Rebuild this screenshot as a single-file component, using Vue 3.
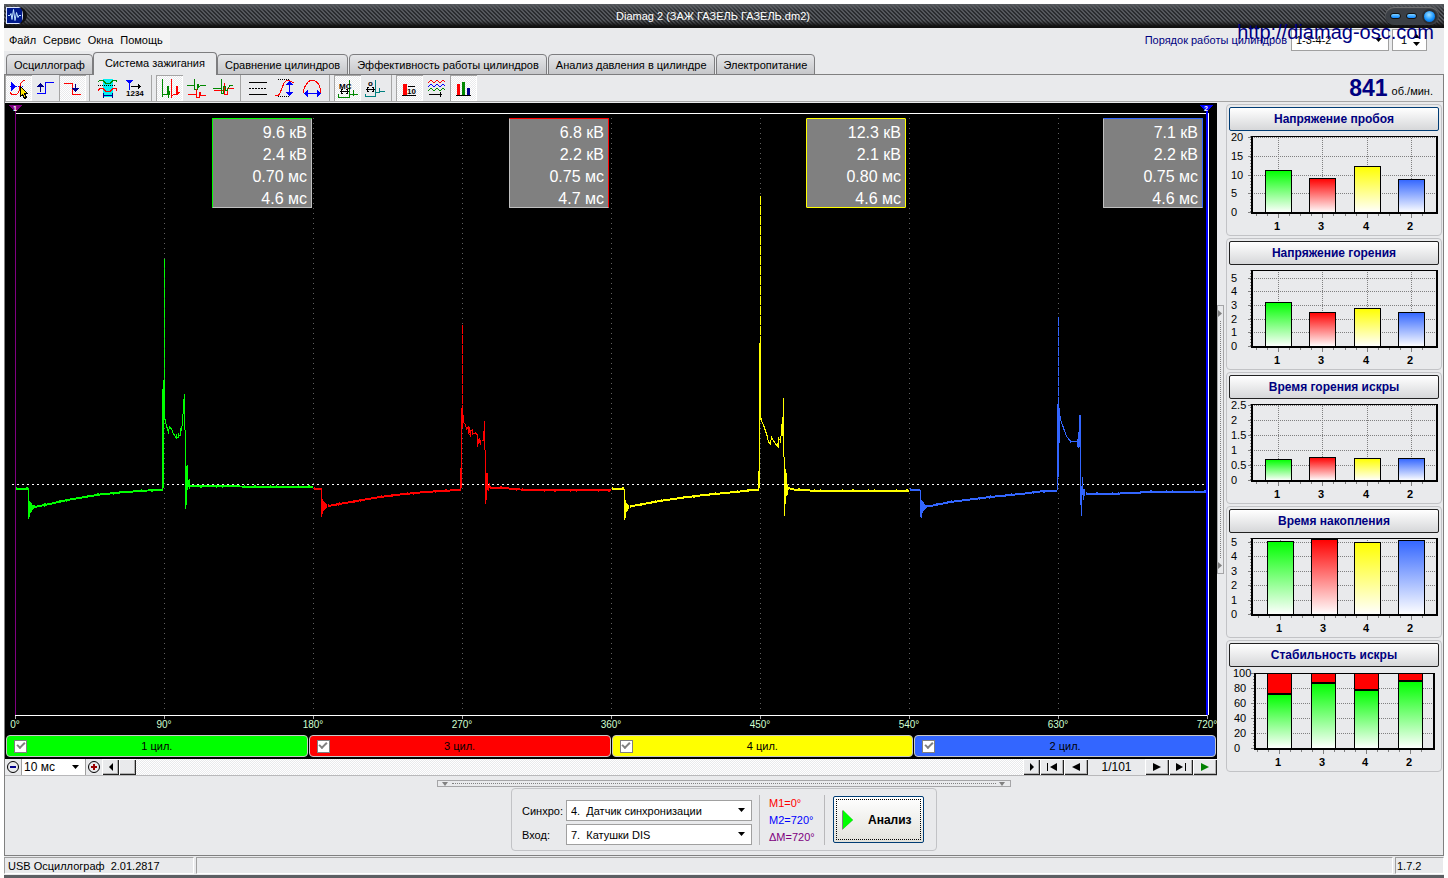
<script setup>
import { ref } from 'vue'

const menus = ['Файл', 'Сервис', 'Окна', 'Помощь']
const tabs = [
  'Осциллограф',
  'Система зажигания',
  'Сравнение цилиндров',
  'Эффективность работы цилиндров',
  'Анализ давления в цилиндре',
  'Электропитание'
]
const activeTab = ref(1)

// Toolbar glyphs: each entry is a list of [path, stroke, fill, dash]
const toolGroups = [
  [
    {
      name: 'Указатель', on: true, shapes: [
        ['M5 11.5h14', '#0000ff', 'none', '1 1'],
        ['M6 7v9l5 -4.5z', 'none', '#0000ff'],
        ['M5 17q1 3 4 3q4 0 5 -4l1 -5q1 -5 5 -6', '#f00', 'none'],
        ['M15.5 11.5v10l2 -2l2 4l2 -1l-2 -4h3z', '#000', '#ffe600']
      ]
    },
    {
      name: 'Передний фронт', on: false, shapes: [
        ['M5 18.5h8.5v-11h8', '#0000ff', 'none'],
        ['M8.5 9v8', '#00008b', 'none'],
        ['M5 12h7l-3.5 -4z', 'none', '#00008b']
      ]
    },
    {
      name: 'Задний фронт', on: true, shapes: [
        ['M5 8.5h8.5v11h8', '#f00', 'none'],
        ['M16.5 9v7', '#00008b', 'none'],
        ['M13 13h7l-3.5 4z', 'none', '#00008b']
      ]
    }
  ],
  [
    {
      name: 'Наложение', on: false, shapes: [
        ['M9 4h10v18h-10z', 'none', '#00f0f0'],
        ['M4 6.5l2 -1h3l3 3h4l3 -3h3l1 1', '#080', 'none'],
        ['M4 10.5h18', '#000', 'none', '1 1'],
        ['M4 15.5l2 -2h3l3 3h4l3 -3h3l1 2', '#f00', 'none'],
        ['M9.5 18v5M18.5 18v5M9 20.5h9', '#00008b', 'none']
      ]
    },
    {
      name: 'Нумерация', on: false, text: ['1234', 5, 21], shapes: [
        ['M5 5h7l-3.5 4z', 'none', '#0000ff'],
        ['M8.5 6v9', '#0000ff', 'none'],
        ['M10 11.5h10M17.5 9v5M18.5 10v3', '#000', 'none']
      ]
    }
  ],
  [
    {
      name: 'Парад', on: true, shapes: [
        ['M6.5 4v18M6 19.5h5v-8h1v11l2 -6', '#080', 'none'],
        ['M15.5 4v18l2 -3h3v-8h1v8l2 -2', '#f00', 'none']
      ]
    },
    {
      name: 'Растр', on: false, shapes: [
        ['M4 10.5h7v-7v11h3v-5h1v3l3 -2h5', '#080', 'none'],
        ['M5 19.5h8v-6v9h3v-5h1v3h6', '#f00', 'none']
      ]
    },
    {
      name: 'Наложенный растр', on: false, shapes: [
        ['M4 15.5h10v-8v12h3v-6h7', '#f00', 'none'],
        ['M3 13.5h8v-10v15h2v-7h2v4h2l3 -5h3', '#080', 'none']
      ]
    }
  ],
  [
    {
      name: 'Линии', on: false, shapes: [
        ['M4 7.5h18M4 19.5h18', '#000', 'none'],
        ['M4 13.5h18', '#000', 'none', '2 1']
      ]
    },
    {
      name: 'Амплитуда', on: false, shapes: [
        ['M6 4.5h12M6 21.5h12', '#000', 'none', '1 1'],
        ['M3 20q3 2 5 -2l4 -10q3 -5 10 0', '#f00', 'none'],
        ['M17.5 8v11', '#0000ff', 'none'],
        ['M14 10h7l-3.5 -4zM14 17h7l-3.5 4z', 'none', '#0000ff']
      ]
    },
    {
      name: 'Длительность', on: false, shapes: [
        ['M5 18q-1 -4 2 -8q3 -5 6 -5q4 0 7 5q2 4 2 8', '#f00', 'none'],
        ['M7 18.5h13', '#0000ff', 'none'],
        ['M9 15v7l-4 -3.5zM18 15v7l4 -3.5z', 'none', '#0000ff']
      ]
    }
  ],
  [
    {
      name: 'Миллисекунды', on: true, text: ['MC', 5, 14], shapes: [
        ['M6 16.5h8M8.5 14l-2 2.5l2 2.5M12.5 14l2 2.5l-2 2.5', '#000', 'none'],
        ['M4 19v4l2 -1h9.5v-17v14h4v-4v6l1 -2h3', '#080', 'none']
      ]
    },
    {
      name: 'Градусы', on: false, text: ['o', 7, 11], shapes: [
        ['M5 14.5h9M7.5 12l-2 2.5l2 2.5M11.5 12l2 2.5l-2 2.5', '#000', 'none'],
        ['M4 19v3l2 -1h8.5v-16v12h4v-4v5l1 -2h4', '#008080', 'none']
      ]
    }
  ],
  [
    {
      name: 'Значения', on: true, text: ['10', 11, 19], shapes: [
        ['M7 9h4v11h-4z', 'none', '#f00'],
        ['M12 11.5h7M6 20.5h14', '#000', 'none']
      ]
    },
    {
      name: 'Сигналы', on: false, shapes: [
        ['M5 8l3 -3l3 3l3 -3l3 3l3 -3l2 2', '#f00', 'none'],
        ['M5 12l3 -3l3 3l3 -3l3 3l3 -3l2 2', '#0000ff', 'none'],
        ['M5 16l3 -3l3 3l3 -3l3 3l3 -3l2 2', '#080', 'none'],
        ['M6 19.5h13M17.5 17v5', '#000', 'none']
      ]
    },
    {
      name: 'Диаграммы', on: true, shapes: [
        ['M7 9h3v11h-3z', 'none', '#f00'],
        ['M12 7h3v13h-3z', 'none', '#080'],
        ['M17 13h3v7h-3z', 'none', '#00008b'],
        ['M6 20.5h15', '#000', 'none']
      ]
    }
  ]
]

const degrees = [0, 90, 180, 270, 360, 450, 540, 630, 720]
const plotX = (deg) => 15.5 + (deg / 720) * 1192

const readouts = [
  { color: 'green', lines: ['9.6 кВ', '2.4 кВ', '0.70 мс', '4.6 мс'] },
  { color: 'red', lines: ['6.8 кВ', '2.2 кВ', '0.75 мс', '4.7 мс'] },
  { color: 'yellow', lines: ['12.3 кВ', '2.1 кВ', '0.80 мс', '4.6 мс'] },
  { color: 'blue', lines: ['7.1 кВ', '2.2 кВ', '0.75 мс', '4.6 мс'] }
]

// base: slow parts of the signal; fast: spark line and ringing; peak: thin breakdown spike
const traces = [
  {
    color: '#00ff00',
    base: 'M16 488.5H28M34 507L50 504L67 500L85 497L100 494.5L120 492.5L140 491L163 489.5M190 486L240 486.5L313 487',
    fast: 'M28.5 488V519M29.5 501V517M30.5 502V513M31.5 503V512M32.5 505V510M33.5 505V509M162.5 389V490M163.5 380V488M164.5 380V418L165.5 421L166.5 426L168.5 432L169.5 427L171.5 429L173.5 434L176.5 438L178.5 437L180.5 434L181.5 429L182.5 423L183.5 405L184.5 394V430M185.5 430V509M186.5 466V505M187.5 465V490M188.5 480V487M189.5 479V489M176.5 434V438M180.5 428V436M178.5 433V437',
    peak: 'M164.5 259V420'
  },
  {
    color: '#ff0000',
    base: 'M314 488.5H321M328 506L345 503L362 500L380 497L400 494.5L420 492.5L440 491L461 490M490 487.5L504 488L520 489.5L540 490L611 490',
    fast: 'M321.5 488V517M322.5 499V514M323.5 501V511M324.5 502V510M325.5 503V509M326.5 504V508M460.5 468V490M461.5 408V488M462.5 408V428M463.5 415V422L465.5 425L466.5 429L468.5 427V433L470.5 436V431L472.5 430V434L475.5 433L477.5 435V447M478.5 439V444M479.5 438V443M480.5 440V445M481.5 440H483.5V431M484.5 421V450M485.5 450V504M486.5 473V500M487.5 473V490M488.5 485V491M489.5 483V488M470.5 430V436M469.5 427V433',
    peak: 'M462.5 325V420'
  },
  {
    color: '#ffff00',
    base: 'M612 488.5H624M630 506.5L640 504.5L660 501L680 498L700 495.5L720 493.5L740 491.5L759 489.5M788 488L794 489.5L810 490.5L909 490.5',
    fast: 'M624.5 489V520M625.5 500V518M626.5 503V512M627.5 504V511M628.5 505V509M758.5 471V490M759.5 343V488M760.5 343V418M761.5 418V421L763.5 425L765.5 431L767.5 437L768.5 442L770.5 444L771.5 437L773.5 441L776.5 445L778.5 447V438L780.5 441L781.5 432L782.5 417M783.5 398V457M784.5 457V516M785.5 469V504M786.5 473V496M787.5 484V495M777.5 443V447M780.5 437V443M782.5 417V436',
    peak: 'M760.5 196V420'
  },
  {
    color: '#3366ff',
    base: 'M910 489.5H920M926 506.5L936 505L950 502L970 499.5L990 497L1010 495L1025 493.5L1040 491.5L1057 490.5M1086 493.5L1120 493.5L1140 492.5L1160 491.5L1207 491.5',
    fast: 'M920.5 490V517M921.5 500V518M922.5 501V513M923.5 502V511M924.5 504V510M925.5 505V509M1057.5 404V490M1058.5 404V477M1059.5 408V443M1060.5 416V420L1062.5 425L1064.5 431L1066.5 436L1068.5 439L1070.5 441V443M1071 441.5H1077M1077.5 439V447M1078.5 432V448M1079.5 415V447M1080.5 415V505M1081.5 486V516M1082.5 477V495M1083.5 489V500M1084.5 489V496',
    peak: 'M1058.5 317V420'
  }
]

const cylinders = ref([
  { label: '1 цил.', color: 'green', on: true },
  { label: '3 цил.', color: 'red', on: true },
  { label: '4 цил.', color: 'yellow', on: true },
  { label: '2 цил.', color: 'blue', on: true }
])

const fills = ['green', 'red', 'yellow', 'blue']
const charts = [
  {
    title: 'Напряжение пробоя', focus: true, left: 26, right: 211, top: 5, w: 26,
    ticks: [['20', 6], ['15', 25], ['10', 44], ['5', 62], ['0', 81]],
    bars: [[39, 39], [83, 47], [128, 35], [172, 48]]
  },
  {
    title: 'Напряжение горения', left: 26, right: 211, top: 5, w: 26,
    ticks: [['5', 13], ['4', 26], ['3', 40], ['2', 54], ['1', 67], ['0', 81]],
    bars: [[39, 37], [83, 47], [128, 43], [172, 47]]
  },
  {
    title: 'Время горения искры', left: 26, right: 211, top: 5, w: 26,
    ticks: [['2.5', 6], ['2', 21], ['1.5', 36], ['1', 51], ['0.5', 66], ['0', 81]],
    bars: [[39, 60], [83, 58], [128, 59], [172, 59]]
  },
  {
    title: 'Время накопления', left: 26, right: 211, top: 5, w: 26,
    ticks: [['5', 9], ['4', 23], ['3', 38], ['2', 52], ['1', 67], ['0', 81]],
    bars: [[41, 8], [85, 6], [128, 9], [172, 7]]
  },
  {
    title: 'Стабильность искры', stacked: true, left: 29, right: 208, top: 6, w: 24,
    ticks: [['100', 6], ['80', 21], ['60', 36], ['40', 51], ['20', 66], ['0', 81]],
    bars: [[41, 27], [85, 16], [128, 23], [172, 14]]
  }
]
const barNames = ['1', '3', '4', '2']
</script>

<template>
  <div class="window">
    <header class="titlebar">
      <svg class="app-icon" width="17" height="17" viewBox="0 0 17 17">
        <rect x=".5" y=".5" width="16" height="16" fill="#001a8c" stroke="#dfe8ff" />
        <path d="M2 8.5h2l1 -2l1 6l1.5 -10l1.500 11l1.500 -8l1.500 5l1 -2h2" fill="none" stroke="#bfe4ff" />
      </svg>
      <h1>Diamag 2 (ЗАЖ ГАЗЕЛЬ ГАЗЕЛЬ.dm2)</h1>
      <div class="win-buttons">
        <button aria-label="Свернуть"></button>
        <button aria-label="Развернуть"></button>
        <button class="close" aria-label="Закрыть"></button>
      </div>
    </header>

    <div class="menubar">
      <nav>
        <button v-for="m in menus" :key="m">{{ m }}</button>
      </nav>
      <div class="order">
        <label for="order">Порядок работы цилиндров</label>
        <span class="combo order-combo">
          <select id="order"><option>1-3-4-2</option></select>
          <svg width="9" height="5" viewBox="0 0 9 5"><path d="M1 0h7l-3.5 4z" /></svg>
        </span>
        <span class="spinner">
          <input aria-label="Первый цилиндр" value="1" />
          <svg width="9" height="13" viewBox="0 0 9 13"><path d="M1 4h7l-3.5 -4zM1 8h7l-3.5 4z" /></svg>
        </span>
      </div>
      <a class="site" href="http://diamag-osc.com">http://diamag-osc.com</a>
    </div>

    <div class="tabs" role="tablist">
      <button
        v-for="(t, i) in tabs" :key="t" role="tab" class="tab"
        :class="{ active: i === activeTab }" :aria-selected="i === activeTab" @click="activeTab = i"
      >{{ t }}</button>
    </div>

    <main class="page">
      <div class="toolbar">
        <div v-for="(g, gi) in toolGroups" :key="gi" class="tool-group">
          <button v-for="t in g" :key="t.name" class="tool" :class="{ on: t.on }" :aria-label="t.name">
            <svg width="27" height="27" viewBox="0 0 27 27" shape-rendering="crispEdges">
              <path
                v-for="(s, si) in t.shapes" :key="si"
                :d="s[0]" :stroke="s[1]" :fill="s[2]" :stroke-dasharray="s[3]"
              />
              <text v-if="t.text" :x="t.text[1]" :y="t.text[2]" class="tool-text">{{ t.text[0] }}</text>
            </svg>
          </button>
        </div>
        <p class="rpm"><b>841</b> об./мин.</p>
      </div>

      <div class="work">
        <section class="scope">
          <div class="plot">
            <svg class="plot-svg" viewBox="5 103 1212 632" preserveAspectRatio="none" shape-rendering="crispEdges" fill="none">
              <rect x="5" y="103" width="1212" height="632" fill="#000" />
              <path
                v-for="d in degrees.slice(1, 8)" :key="d" :d="`M${plotX(d)} 118V712`"
                stroke="#606060" stroke-dasharray="1 4"
              />
              <path v-for="d in degrees" :key="'t' + d" :d="`M${plotX(d)} 715V719`" stroke="#aaa" />
              <path d="M12 484.5H1207" stroke="#fff" stroke-dasharray="2 3" />
              <path d="M15 113.5H1207M15 715.5H1207" stroke="#fff" />
              <g v-for="t in traces" :key="t.color" :stroke="t.color">
                <path :d="t.base" stroke-width="2" />
                <path :d="t.base" stroke-width="3" stroke-dasharray="1 9 2 14 1 5 1 21" />
                <path :d="t.fast" />
                <path :d="t.peak" stroke-dasharray="9 1" />
              </g>
              <path d="M15.5 111V715" stroke="#800080" />
              <path d="M8 105H23L15.5 112z" fill="#800080" />
              <path d="M1207 111V715" stroke="#0000ff" stroke-width="2" />
              <path d="M1208.5 113V715" stroke="#fff" />
              <path d="M1199 105H1214L1206.5 112z" fill="#0000ff" />
              <text x="13" y="111" class="marker">1</text>
              <text x="1204" y="111" class="marker">2</text>
            </svg>
            <div class="readouts">
              <div v-for="r in readouts" :key="r.color" class="readout" :class="r.color">
                <p v-for="(l, li) in r.lines" :key="li">{{ l }}</p>
              </div>
            </div>
            <div class="axis">
              <span v-for="d in degrees" :key="d" :style="{ left: (d / 720) * 100 + '%' }">{{ d }}°</span>
            </div>
          </div>
          <div class="cylinders">
            <label v-for="c in cylinders" :key="c.label" class="cyl" :class="c.color">
              <input v-model="c.on" type="checkbox" />
              <span>{{ c.label }}</span>
            </label>
          </div>
          <div class="scrollrow">
            <button class="flat" aria-label="Уменьшить масштаб">
              <svg width="16" height="16" viewBox="0 0 16 16" fill="none">
                <circle cx="8" cy="8" r="5.5" stroke="#000" /><path d="M5 8h6" stroke="#00008b" stroke-width="2" />
              </svg>
            </button>
            <span class="combo scale-combo">
              <select aria-label="Масштаб"><option>10 мс</option></select>
              <svg width="9" height="5" viewBox="0 0 9 5"><path d="M1 0h7l-3.5 4z" /></svg>
            </span>
            <button class="flat" aria-label="Увеличить масштаб">
              <svg width="16" height="16" viewBox="0 0 16 16" fill="none">
                <circle cx="8" cy="8" r="5.5" stroke="#000" /><path d="M5 8h6M8 5v6" stroke="#900" stroke-width="2" />
              </svg>
            </button>
            <button class="raised small" aria-label="Влево">
              <svg width="6" height="8" viewBox="0 0 6 8"><path d="M5 0v8l-4 -4z" /></svg>
            </button>
            <button class="raised small" aria-label="Ползунок"></button>
            <div class="track"></div>
            <button class="raised small" aria-label="Вправо">
              <svg width="6" height="8" viewBox="0 0 6 8"><path d="M1 0v8l4 -4z" /></svg>
            </button>
            <button class="raised" aria-label="Первый кадр">
              <svg width="12" height="8" viewBox="0 0 12 8"><path d="M1 0h1v8h-1zM11 0v8l-7 -4z" /></svg>
            </button>
            <button class="raised" aria-label="Предыдущий кадр">
              <svg width="10" height="8" viewBox="0 0 10 8"><path d="M9 0v8l-8 -4z" /></svg>
            </button>
            <span class="counter">1/101</span>
            <button class="raised" aria-label="Следующий кадр">
              <svg width="10" height="8" viewBox="0 0 10 8"><path d="M1 0v8l8 -4z" /></svg>
            </button>
            <button class="raised" aria-label="Последний кадр">
              <svg width="12" height="8" viewBox="0 0 12 8"><path d="M1 0v8l7 -4zM10 0h1v8h-1z" /></svg>
            </button>
            <button class="raised play" aria-label="Воспроизвести">
              <svg width="10" height="8" viewBox="0 0 10 8"><path d="M1 0v8l8 -4z" /></svg>
            </button>
          </div>
        </section>

        <div class="vsplit">
          <svg width="5" height="9" viewBox="0 0 5 9"><path d="M0 1v7l4 -3.5z" /></svg>
          <i></i>
          <svg width="5" height="9" viewBox="0 0 5 9"><path d="M0 1v7l4 -3.5z" /></svg>
        </div>

        <aside class="side">
          <section v-for="(c, ci) in charts" :key="c.title" class="panel">
            <button class="panel-title" :class="{ focus: c.focus }">{{ c.title }}</button>
            <svg class="chart" width="214" height="104" viewBox="1 0 214 104" shape-rendering="crispEdges" fill="none">
              <defs>
                <linearGradient v-for="f in fills" :id="`${f}-${ci}`" :key="f" x1="0" y1="0" x2="0" y2="1">
                  <stop offset="0" :class="`stop-${f}`" />
                  <stop offset="1" stop-color="#fff" />
                </linearGradient>
              </defs>
              <g stroke="#808080">
                <path
                  v-for="t in c.ticks" :key="t[0]" :d="`M${c.left} ${t[1] + 0.5}H${c.right}`"
                  stroke-dasharray="1 1"
                />
                <path
                  v-for="b in c.bars" :key="b[0]" :d="`M${b[0] + c.w / 2 + 0.5} ${c.top}V81`"
                  stroke-dasharray="1 1"
                />
                <path v-for="t in c.ticks" :key="'k' + t[0]" :d="`M${c.left - 4} ${t[1] + 0.5}h4`" />
                <path :d="`M${c.left - 1} ${c.top}V81`" stroke-width="2" stroke-dasharray="1 2" />
                <path v-for="b in c.bars" :key="'v' + b[0]" :d="`M${b[0] + c.w / 2 + 0.5} 82v5`" />
                <path
                  v-for="b in c.bars" :key="'m' + b[0]"
                  :d="`M${b[0] + c.w / 2 - 21.5} 82v3m11 -3v3m22 -3v3`"
                />
              </g>
              <template v-for="(b, bi) in c.bars" :key="bi">
                <rect v-if="c.stacked" :x="b[0] + 0.5" y="6.5" :width="c.w" :height="b[1] - 6" fill="#f00" stroke="#000" />
                <rect
                  :x="b[0] + 0.5" :y="b[1] + 0.5" :width="c.w" :height="81 - b[1]"
                  :fill="`url(#${c.stacked ? 'green' : fills[bi]}-${ci})`" stroke="#000"
                />
                <path v-if="c.stacked" :d="`M${b[0]} ${b[1]}h${c.w + 1}`" stroke="#000" stroke-width="2" />
              </template>
              <path :d="`M${c.left} ${c.top + 0.5}H${c.right}`" stroke="#000" />
              <path :d="`M${c.left} ${c.top}V82H${c.right}V${c.top}`" stroke="#000" stroke-width="2" />
              <text
                v-for="t in c.ticks" :key="'l' + t[0]" class="tick"
                :x="c.stacked ? (t[0] === '100' ? 7 : 8) : 5" :y="t[1] + 4"
              >{{ t[0] }}</text>
              <text
                v-for="(b, bi) in c.bars" :key="'n' + bi" class="bar-name" text-anchor="middle"
                :x="b[0] + c.w / 2 - 1" y="99"
              >{{ barNames[bi] }}</text>
            </svg>
          </section>
        </aside>
      </div>

      <div class="hsplit">
        <svg width="9" height="4" viewBox="0 0 9 4"><path d="M1 0h6l-3 4z" /></svg>
        <i></i>
        <svg width="9" height="4" viewBox="0 0 9 4"><path d="M1 0h6l-3 4z" /></svg>
      </div>

      <section class="controls">
        <div class="fields">
          <label for="sync">Синхро:</label>
          <span class="combo">
            <select id="sync"><option>4.&nbsp; Датчик синхронизации</option></select>
            <svg width="9" height="5" viewBox="0 0 9 5"><path d="M1 0h7l-3.5 4z" /></svg>
          </span>
          <label for="input">Вход:</label>
          <span class="combo">
            <select id="input"><option>7.&nbsp; Катушки DIS</option></select>
            <svg width="9" height="5" viewBox="0 0 9 5"><path d="M1 0h7l-3.5 4z" /></svg>
          </span>
        </div>
        <div class="markers">
          <p class="m1">M1=0°</p>
          <p class="m2">M2=720°</p>
          <p class="dm">ΔM=720°</p>
        </div>
        <button class="analyze">
          <svg width="12" height="20" viewBox="0 0 12 20"><path d="M0 0l11 10l-11 10z" fill="#808080" /><path d="M1 0l10 10l-10 9z" fill="#0f0" /></svg>
          <span>Анализ</span>
        </button>
      </section>
    </main>

    <footer class="status">
      <span class="cell first">USB Осциллограф&nbsp; 2.01.2817</span>
      <span class="cell grow"></span>
      <span class="cell last">1.7.2</span>
    </footer>
  </div>
</template>

<style>
body {
  margin: 0;
  background: #fff;
}
</style>

<style scoped>
.window {
  box-sizing: border-box;
  min-height: 100vh;
  margin: 0 4px;
  padding-top: 4px;
  display: flex;
  flex-direction: column;
  background: linear-gradient(#fff 4px, #e9eaec 4px);
  border-bottom: 4px solid #5c5f63;
  font: 11px/14px "Liberation Sans", Arial, sans-serif;
  color: #000;
}
p, h1 {
  margin: 0;
}
button, select, input {
  font: inherit;
  color: inherit;
  margin: 0;
  padding: 0;
  border: 0;
  border-radius: 0;
  background: none;
}
svg {
  display: block;
}

.titlebar {
  display: flex;
  align-items: center;
  height: 24px;
  background:
    linear-gradient(rgba(90, 93, 98, .9), rgba(60, 62, 66, 0) 30%, rgba(0, 0, 0, 0) 70%, #111 92%),
    linear-gradient(45deg, #2a2c2f 25%, #54575c 25% 50%, #2a2c2f 50% 75%, #54575c 75%) 0 0 / 4px 4px;
  color: #fff;
}
.app-icon {
  margin: 0 0 2px 2px;
  padding-right: 4px;
  background: #111;
  border-radius: 0 9px 9px 0;
}
.titlebar h1 {
  flex: 1;
  text-align: center;
  font-size: 11px;
  font-weight: 400;
  padding-left: 14px;
}
.win-buttons {
  display: flex;
  align-items: center;
  gap: 5px;
  height: 18px;
  padding: 0 2px 0 5px;
  margin-right: 5px;
  border-radius: 9px;
  background: #3b3f45;
  box-shadow: inset 0 1px 1px #777;
}
.win-buttons button {
  width: 11px;
  height: 6px;
  border-radius: 3px;
  background: linear-gradient(#7fd0ff, #0a84ff);
  border: 1px solid #111;
}
.win-buttons .close {
  width: 15px;
  height: 15px;
  border-radius: 50%;
  background: radial-gradient(circle at 45% 35%, #9fe0ff, #1593ff 55%, #0050b0);
  border: 2px solid #2a2e33;
}

.menubar {
  position: relative;
  display: flex;
  justify-content: space-between;
  height: 24px;
}
.menubar nav {
  display: flex;
  gap: 7px;
  height: 23px;
  padding: 0 7px 0 5px;
  background: #f3f3f3;
}
.order {
  display: flex;
  align-items: center;
  height: 24px;
  color: #000080;
}
.order label {
  margin-right: 4px;
}
.site {
  position: absolute;
  right: 10px;
  top: -7px;
  font-size: 20px;
  line-height: 22px;
  color: #000080;
  text-decoration: none;
}
.combo, .spinner {
  display: grid;
  align-items: center;
  box-sizing: border-box;
  background: #fff;
  border: 1px solid #a0a0a0;
  color: #000;
}
.combo select, .combo svg, .spinner input, .spinner svg {
  grid-area: 1 / 1;
}
.combo select {
  appearance: none;
  width: 100%;
  padding: 0 16px 0 4px;
  line-height: 14px;
}
.combo svg, .spinner svg {
  justify-self: end;
  margin-right: 5px;
  pointer-events: none;
}
.order-combo {
  width: 98px;
  height: 22px;
  margin-right: 3px;
}
.spinner {
  width: 35px;
  height: 22px;
  margin-right: 17px;
}
.spinner input {
  width: 30px;
  padding-left: 8px;
  box-sizing: border-box;
}

.tabs {
  display: flex;
  align-items: flex-end;
  height: 23px;
  padding-left: 2px;
  margin-bottom: -1px;
  position: relative;
}
.tab {
  height: 21px;
  padding: 0 7px;
  border: 1px solid #7d7d7f;
  border-radius: 4px 4px 0 0;
  background: linear-gradient(#e6e7e9, #c6c7ca);
  margin-right: 1px;
}
.tab.active {
  height: 23px;
  padding: 0 11px 2px;
  background: #e9eaec;
  border-bottom: 0;
  margin: 0 0 0 -1px;
}

.page {
  flex: 1;
  display: flex;
  flex-direction: column;
  border: 1px solid #808080;
}
.toolbar {
  display: flex;
  height: 27px;
  border-bottom: 1px solid #a5a5a5;
  box-sizing: border-box;
}
.tool-group {
  display: flex;
}
.tool-group:not(:nth-of-type(6)) {
  border-right: 1px solid #a5a5a5;
  padding-right: 3px;
  margin-right: 4px;
}
.tool {
  width: 27px;
  height: 26px;
  overflow: hidden;
}
.tool.on {
  background: repeating-conic-gradient(#fff 0 25%, #e9eaec 0 50%) 0 0 / 2px 2px;
  box-shadow: inset 1px 1px #a5a5a5, inset -1px -1px #fff;
}
.tool-text {
  font: bold 8px "Liberation Sans", sans-serif;
  fill: #000;
}
.rpm {
  flex: 1;
  text-align: right;
  padding-right: 10px;
  line-height: 27px;
}
.rpm b {
  font-size: 23px;
  color: #000080;
  vertical-align: -1px;
  margin-right: 1px;
}

.work {
  flex: 1;
  display: flex;
  margin-top: 1px;
}
.scope {
  flex: 1;
  display: flex;
  flex-direction: column;
  background: #000;
}
.plot {
  position: relative;
  flex: 1;
  min-height: 400px;
}
.plot-svg {
  position: absolute;
  width: 100%;
  height: 100%;
}
.marker {
  font: bold 7px "Liberation Sans", sans-serif;
  fill: #fff;
}
.readouts {
  position: absolute;
  inset: 15px 14px auto 10px;
  display: grid;
  grid-template-columns: repeat(4, 1fr);
  justify-items: end;
}
.readout {
  box-sizing: border-box;
  width: 100px;
  height: 90px;
  padding: 3px 4px 0 0;
  background: #808080;
  border: 1px solid #c0c0c0;
  border-radius: 1px;
  color: #fff;
  font-size: 16px;
  line-height: 22px;
  text-align: right;
  overflow: hidden;
}
.readout.green { border-color: #0f0 #c0c0c0 #c0c0c0 #0f0; }
.readout.red { border-color: #f00 #f00 #c0c0c0 #c0c0c0; }
.readout.yellow { border-color: #ff0; }
.readout.blue { border-color: #36f #36f #c0c0c0 #c0c0c0; }
.axis {
  position: absolute;
  inset: auto 10px 3px 10px;
  height: 14px;
  color: #d0ffd0;
  font-size: 10px;
}
.axis span {
  position: absolute;
  transform: translateX(-50%);
}
.cylinders {
  display: grid;
  grid-template-columns: repeat(4, 1fr);
  gap: 1px;
  padding: 0 1px 2px;
}
.cyl {
  display: grid;
  grid-template-columns: 1fr auto 1fr;
  align-items: center;
  box-sizing: border-box;
  height: 22px;
  padding: 0 7px;
  border: 1px solid #c8c8c8;
  border-radius: 4px;
}
.cyl.green { background: #0f0; }
.cyl.red { background: #f00; }
.cyl.yellow { background: #ff0; }
.cyl.blue { background: #36f; }
.cyl input {
  appearance: none;
  width: 13px;
  height: 13px;
  background: #fff;
  border: 1px solid #808080;
  display: grid;
  place-items: center;
}
.cyl input:checked::before {
  content: "";
  width: 6px;
  height: 3px;
  border: solid #808080;
  border-width: 0 0 2px 2px;
  transform: rotate(-45deg);
  margin-bottom: 3px;
}
.scrollrow {
  display: flex;
  height: 17px;
  background: #e9eaec;
  border-bottom: 1px solid #b8b8ba;
  box-sizing: border-box;
}
.flat {
  width: 16px;
}
.scale-combo {
  width: 65px;
  border-width: 0 1px;
}
.scale-combo select {
  padding-left: 2px;
  font-size: 12px;
}
.track {
  flex: 1;
  background: repeating-conic-gradient(#fff 0 25%, #e9eaec 0 50%) 0 0 / 2px 2px;
}
.raised {
  width: 24px;
  display: grid;
  place-items: center;
  box-shadow: inset 1px 1px #fff, inset -1px -1px #222, inset -2px -2px #b0b0b0;
}
.raised.small {
  width: 17px;
}
.play {
  fill: #008000;
}
.counter {
  width: 57px;
  text-align: center;
  font-size: 12px;
  line-height: 17px;
}

.vsplit, .hsplit {
  display: flex;
  align-items: center;
  justify-content: space-between;
  box-sizing: border-box;
  border: 1px solid #a5a5a7;
  fill: #808080;
}
.vsplit {
  flex-direction: column;
  align-self: center;
  width: 7px;
  height: 269px;
  padding: 3px 0;
}
.vsplit i {
  flex: 1;
  margin: 3px 0;
  border-left: 1px dotted #808080;
}
.hsplit {
  align-self: center;
  width: 574px;
  height: 7px;
  margin-top: 4px;
  padding: 0 3px;
}
.hsplit i {
  flex: 1;
  margin: 0 2px;
  border-top: 1px dotted #808080;
}

.side {
  display: flex;
  flex-direction: column;
  gap: 2px;
  width: 216px;
  padding: 1px 1px 4px 2px;
}
.panel {
  box-sizing: border-box;
  height: 132px;
  border: 1px solid #c2c3c6;
  border-radius: 4px;
  padding-top: 2px;
}
.panel-title {
  display: block;
  width: calc(100% - 4px);
  height: 24px;
  margin: 0 2px;
  border: 1px solid #222;
  border-radius: 2px;
  background: linear-gradient(#fff, #d6d7d9);
  font-weight: 700;
  font-size: 12px;
  color: #000080;
}
.panel-title.focus {
  border-color: #003c74;
}
.chart {
  max-width: 100%;
}
.stop-green { stop-color: #0f0; }
.stop-red { stop-color: #f00; }
.stop-yellow { stop-color: #ff0; }
.stop-blue { stop-color: #36f; }
.tick {
  font: 11px "Liberation Sans", sans-serif;
  fill: #000;
}
.bar-name {
  font: bold 11px "Liberation Sans", sans-serif;
  fill: #000;
}

.controls {
  align-self: center;
  display: flex;
  align-items: center;
  box-sizing: border-box;
  width: 426px;
  height: 63px;
  margin: 1px 0 4px;
  padding: 0 11px 0 10px;
  border: 1px solid #c2c3c6;
  border-radius: 4px;
}
.fields {
  display: grid;
  grid-template-columns: 44px 186px;
  row-gap: 3px;
  align-items: center;
  padding-top: 6px;
}
.fields .combo {
  height: 21px;
}
.markers {
  display: flex;
  flex-direction: column;
  gap: 3px;
  box-sizing: border-box;
  margin: 0 8px 0 7px;
  padding: 1px 0 0 9px;
  width: 66px;
  height: 50px;
  border: solid #b8b8ba;
  border-width: 0 1px;
}
.m1 { color: #f00; }
.m2 { color: #00f; }
.dm { color: #800080; }
.analyze {
  display: flex;
  align-items: center;
  gap: 14px;
  width: 91px;
  height: 47px;
  padding-left: 8px;
  border: 1px solid #003c74;
  border-radius: 2px;
  background: linear-gradient(#fff, #e2e2dc);
  outline: 1px dotted #000;
  outline-offset: -4px;
  font-weight: 700;
  font-size: 12px;
}

.status {
  display: flex;
  gap: 2px;
  padding: 1px 0;
}
.cell {
  box-sizing: border-box;
  height: 17px;
  padding: 1px 3px;
  border: 1px solid;
  border-color: #a0a0a0 #fff #fff #a0a0a0;
}
.first { width: 190px; }
.grow { flex: 1; }
.last { width: 49px; padding-left: 1px; }
</style>
